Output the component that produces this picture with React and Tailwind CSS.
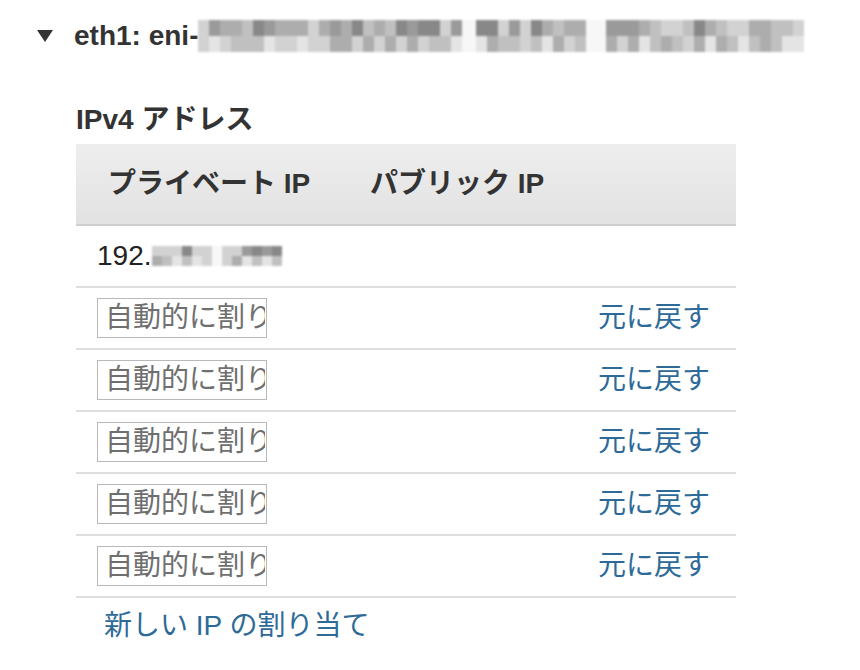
import React from "react";

// greys used for the redacted (pixelated) values
const SHADES = [
  "bg-[#f4f4f4]",
  "bg-[#e4e4e4]",
  "bg-[#d2d2d2]",
  "bg-[#c0c0c0]",
  "bg-[#adadad]",
  "bg-[#9a9a9a]",
  "bg-[#888888]",
];

// cheap deterministic noise so the mosaic looks the same on every render
function noise(i, seed) {
  const x = Math.sin(i * 12.9898 + seed * 78.233) * 43758.5453;
  return x - Math.floor(x);
}

function Mosaic({ segments, cell, rowH, seed }) {
  return (
    <div className="flex items-stretch blur-[1px]">
      {segments.map((seg, si) =>
        seg.gap ? (
          <div key={si} style={{ width: seg.gap }} className="bg-[#f7f7f7]" />
        ) : (
          <div key={si} className="flex">
            {Array.from({ length: seg.cells }).map((_, ci) => {
              const top = 2 + Math.floor(noise(ci + si * 31, seed) * 5);
              const bottom = 1 + Math.floor(noise(ci + 7 + si * 13, seed + 3) * 4);
              return (
                <div key={ci} className="flex flex-col" style={{ width: cell }}>
                  <div className={SHADES[Math.min(6, top)]} style={{ height: rowH }} />
                  <div className={SHADES[Math.min(6, bottom)]} style={{ height: rowH }} />
                </div>
              );
            })}
          </div>
        )
      )}
    </div>
  );
}

function RevertRow() {
  return (
    <div className="flex h-[62px] items-center justify-between border-b-2 border-[#dedede] pl-[21px] pr-[26px]">
      <input
        readOnly
        placeholder="自動的に割り当て"
        className="h-[40px] w-[170px] border border-[#b9b9b9] bg-white pl-[7px] pr-[1px] text-[28px] text-[#555] outline-none placeholder:text-[#6f6f6f]"
      />
      <a href="#" className="text-[28px] text-[#2d6a98]">
        元に戻す
      </a>
    </div>
  );
}

export default function App() {
  return (
    <div className="min-h-[670px] w-[860px] bg-white pt-[20px] font-[family-name:'Liberation_Sans','Noto_Sans_CJK_JP',sans-serif] text-[#333]">
      {/* interface heading */}
      <div className="flex h-[32px] items-center">
        <svg width="16" height="12" viewBox="0 0 16 12" className="ml-[37px] mr-[21px]">
          <path d="M0 0 H16 L8 12 Z" fill="#333" />
        </svg>
        <span className="text-[28px] font-bold leading-none">eth1: eni-</span>
        <Mosaic
          seed={1}
          cell={11}
          rowH={16}
          segments={[
            { cells: 24 },
            { gap: 14 },
            { cells: 10 },
            { gap: 20 },
            { cells: 18 },
          ]}
        />
      </div>

      <div className="ml-[76px] mt-[52px] w-[660px]">
        <h3 className="h-[32px] text-[28px] font-bold leading-[32px]">IPv4 アドレス</h3>

        <div className="mt-[8px]">
          {/* column headers */}
          <div className="flex h-[82px] items-center border-b-2 border-[#cfcfcf] bg-gradient-to-b from-[#eeeeee] to-[#e2e2e2] text-[28px] font-bold">
            <div className="w-[262px] pl-[32px]">プライベート IP</div>
            <div className="pl-[32px]">パブリック IP</div>
          </div>

          {/* primary address */}
          <div className="flex h-[62px] items-center border-b-2 border-[#dedede] pl-[21px] text-[28px] text-[#222]">
            <span>192.</span>
            <Mosaic
              seed={5}
              cell={10}
              rowH={10}
              segments={[{ cells: 6 }, { gap: 10 }, { cells: 6 }]}
            />
          </div>

          {/* secondary addresses */}
          <RevertRow />
          <RevertRow />
          <RevertRow />
          <RevertRow />
          <RevertRow />

          <div className="flex h-[56px] items-center pl-[28px]">
            <a href="#" className="text-[28px] text-[#2d6a98]">
              新しい IP の割り当て
            </a>
          </div>
        </div>
      </div>
    </div>
  );
}
